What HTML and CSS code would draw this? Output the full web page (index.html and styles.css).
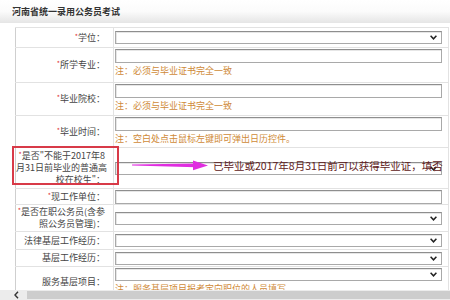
FILE: index.html
```html
<!DOCTYPE html>
<html lang="zh-CN">
  <head>
    <meta charset="UTF-8" />
    <meta name="viewport" content="width=device-width, initial-scale=1.0" />
    <title>河南省统一录用公务员考试</title>
    <link rel="stylesheet" href="styles.css">
  </head>
  <body>
    <div class="page">
      <div class="head"><h1>河南省统一录用公务员考试</h1></div>

      <div class="main">
        <table class="form">
          <tr class="h20">
            <th><span class="req">*</span>学位：</th>
            <td><div class="field sel"><svg viewBox="0 0 7 5"><path d="M0.6 0.8 L3.5 3.8 L6.4 0.8" /></svg></div></td>
          </tr>
          <tr class="h35">
            <th><span class="req">*</span>所学专业：</th>
            <td class="top"><div class="field"></div><div class="note">注：必须与毕业证书完全一致</div></td>
          </tr>
          <tr class="h33">
            <th><span class="req">*</span>毕业院校：</th>
            <td class="top"><div class="field"></div><div class="note">注：必须与毕业证书完全一致</div></td>
          </tr>
          <tr class="h31">
            <th><span class="req">*</span>毕业时间：</th>
            <td class="top"><div class="field"></div><div class="note">注：空白处点击鼠标左键即可弹出日历控件。</div></td>
          </tr>
          <tr class="h41">
            <th><span class="req">*</span>是否"不能于2017年8<br />月31日前毕业的普通高<br />校在校生"：</th>
            <td><div class="field sel"><svg viewBox="0 0 7 5"><path d="M0.6 0.8 L3.5 3.8 L6.4 0.8" /></svg></div></td>
          </tr>
          <tr class="h16">
            <th><span class="req">*</span>现工作单位：</th>
            <td><div class="field"></div></td>
          </tr>
          <tr class="h27">
            <th><span class="req">*</span>是否在职公务员(含参<br />照公务员管理)：</th>
            <td><div class="field sel"><svg viewBox="0 0 7 5"><path d="M0.6 0.8 L3.5 3.8 L6.4 0.8" /></svg></div></td>
          </tr>
          <tr class="h18">
            <th>法律基层工作经历：</th>
            <td><div class="field sel"><svg viewBox="0 0 7 5"><path d="M0.6 0.8 L3.5 3.8 L6.4 0.8" /></svg></div></td>
          </tr>
          <tr class="h17">
            <th>基层工作经历：</th>
            <td><div class="field sel"><svg viewBox="0 0 7 5"><path d="M0.6 0.8 L3.5 3.8 L6.4 0.8" /></svg></div></td>
          </tr>
          <tr class="h31">
            <th>服务基层项目：</th>
            <td class="top"><div class="field sel"><svg viewBox="0 0 7 5"><path d="M0.6 0.8 L3.5 3.8 L6.4 0.8" /></svg></div><div class="note">注：服务基层项目报考定向职位的人员填写。</div></td>
          </tr>
        </table>
      </div>

      <div class="hscroll">
        <div class="hs-btn"><svg viewBox="0 0 5 8"><path d="M4 0.8 L1 4 L4 7.2" /></svg></div>
        <div class="hs-thumb"></div>
      </div>

      <!-- annotation drawn over the screenshot -->
      <div class="mark-box"></div>
      <svg class="mark-arrow" viewBox="0 0 80 14">
        <path d="M2 6.6 L66 5.4 L66 9.2 L2 7.4 Z" />
        <path d="M63 2.6 L78 7.4 L63 12.2 Z" />
      </svg>
      <span class="mark-text">已毕业或2017年8月31日前可以获得毕业证，填否</span>
    </div>
  </body>
</html>
```

FILE: styles.css
```css
body {
  margin: 0;
  font-family: "Noto Sans CJK SC", "Liberation Sans", sans-serif;
  background-color: #fff;
}

.page {
  position: relative;
  width: 450px;
  height: 300px;
  overflow: hidden;
  display: flex;
  flex-direction: column;
}

.head {
  flex-shrink: 0;
  height: 23px;
  padding-left: 12px;
  display: flex;
  align-items: center;
  background: linear-gradient(#fff, #fbfbfb 50%, #e5e5e5);
}

.head h1 {
  margin: 0;
  font-size: 9px;
  font-weight: bold;
  color: #333;
}

.main {
  flex: 1;
  overflow: hidden;
  padding-top: 4px;
}

.form {
  border-collapse: collapse;
  table-layout: fixed;
  margin-left: 15px;
  width: 434px;
}

.form th,
.form td {
  border: 1px solid #e2e2e2;
}

.form th {
  width: 98px;
  box-sizing: border-box;
  padding: 0 8px 0 0;
  text-align: right;
  vertical-align: middle;
  white-space: nowrap;
  font-size: 9px;
  line-height: 12px;
  font-weight: normal;
  color: #444;
  border-left-color: #cfcfcf;
}

.form td {
  padding: 0 0 0 1px;
  vertical-align: middle;
}

.form td.top {
  vertical-align: top;
  padding-top: 1px;
}

.h16 { height: 16px; }
.h17 { height: 17px; }
.h18 { height: 18px; }
.h20 { height: 20px; }
.h27 { height: 27px; }
.h31 { height: 31px; }
.h33 { height: 33px; }
.h35 { height: 35px; }
.h41 { height: 41px; }

.req {
  color: #e03030;
  font-size: 7px;
  line-height: 8px;
  vertical-align: top;
}

.field {
  box-sizing: border-box;
  width: 327px;
  height: 14px;
  border: 1px solid #a9a9a9;
  border-top-color: #8e8e8e;
  background-color: #fff;
  box-shadow: inset 1px 1px 0 #e6e6e6;
}

.field.sel {
  height: 13px;
  display: flex;
  justify-content: flex-end;
  align-items: center;
  padding-right: 4px;
}

.sel svg {
  width: 7px;
  height: 5px;
}

.sel path {
  fill: none;
  stroke: #222;
  stroke-width: 1.5;
}

.note {
  font-size: 9px;
  line-height: 16px;
  color: #cf8a38;
  white-space: nowrap;
}

.hscroll {
  flex-shrink: 0;
  height: 10px;
  display: flex;
  background-color: #ececec;
}

.hs-btn {
  width: 27px;
  display: flex;
  align-items: center;
  justify-content: center;
}

.hs-btn svg {
  width: 5px;
  height: 8px;
  margin-left: 6px;
}

.hs-btn path {
  fill: none;
  stroke: #333;
  stroke-width: 1.4;
}

.hs-thumb {
  flex: 1;
  margin: 1px 0;
  background-color: #cdcdcd;
}

.mark-box {
  position: absolute;
  left: 12px;
  top: 146px;
  width: 107px;
  height: 39px;
  box-sizing: border-box;
  border: 2px solid #d83a48;
}

.mark-arrow {
  position: absolute;
  left: 130px;
  top: 158px;
  width: 80px;
  height: 14px;
  fill: #e02ee0;
}

.mark-text {
  position: absolute;
  left: 213px;
  top: 159px;
  font-size: 10.5px;
  line-height: 14px;
  color: #5e2020;
  white-space: nowrap;
}
```
